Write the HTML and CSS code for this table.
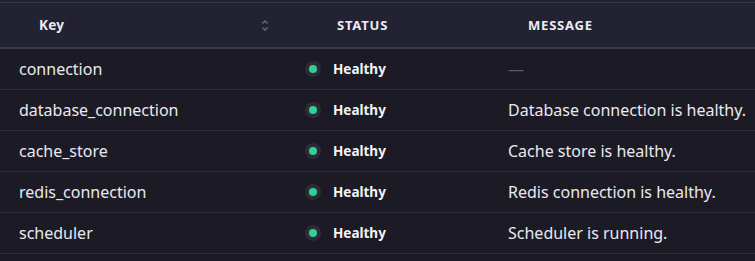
FILE: index.html
```html
<!DOCTYPE html>
<html>
<head>
<meta charset="utf-8">
<link rel="stylesheet" href="styles.css">
</head>
<body>
<div class="table">
  <div class="row head">
    <div class="cell key-h">
      <span>Key</span>
      <svg class="sort" width="8" height="13" viewBox="0 0 8 13"><path d="M1.5 4.5 L4 2 L6.5 4.5" fill="none" stroke="#6c6b80" stroke-width="1.3"/><path d="M1.5 8.5 L4 11 L6.5 8.5" fill="none" stroke="#6c6b80" stroke-width="1.3"/></svg>
    </div>
    <div class="cell status-h">STATUS</div>
    <div class="cell msg-h">MESSAGE</div>
  </div>
  <div class="row">
    <div class="cell key">connection</div>
    <div class="cell status"><span class="dot"></span><span class="label">Healthy</span></div>
    <div class="cell msg"><span class="dash">—</span></div>
  </div>
  <div class="row">
    <div class="cell key">database_connection</div>
    <div class="cell status"><span class="dot"></span><span class="label">Healthy</span></div>
    <div class="cell msg">Database connection is healthy.</div>
  </div>
  <div class="row">
    <div class="cell key">cache_store</div>
    <div class="cell status"><span class="dot"></span><span class="label">Healthy</span></div>
    <div class="cell msg">Cache store is healthy.</div>
  </div>
  <div class="row">
    <div class="cell key">redis_connection</div>
    <div class="cell status"><span class="dot"></span><span class="label">Healthy</span></div>
    <div class="cell msg">Redis connection is healthy.</div>
  </div>
  <div class="row">
    <div class="cell key">scheduler</div>
    <div class="cell status"><span class="dot"></span><span class="label">Healthy</span></div>
    <div class="cell msg">Scheduler is running.</div>
  </div>
</div>
</body>
</html>
```
FILE: styles.css
```css
html, body {
  margin: 0;
  padding: 0;
  background: #1c1b25;
}
body {
  font-family: "Noto Sans", "Open Sans", sans-serif;
  color: #e9e9f0;
  padding-top: 2px;
  background: linear-gradient(#22212f 0 2px, #1c1b25 2px);
}
.table {
  width: 755px;
  border-top: 1px solid #3a394c;
}
.row {
  display: grid;
  grid-template-columns: 286px 203px 1fr;
  height: 40px;
  border-bottom: 1px solid #2e2d3b;
  background: #1c1b25;
}
.row.head {
  height: 44px;
  background: #232233;
  border-bottom: 2px solid #3b3a4f;
}
.cell {
  display: flex;
  align-items: center;
  padding-left: 19px;
  font-size: 16px;
  white-space: nowrap;
}
.head .cell {
  font-size: 13px;
  font-weight: 700;
  letter-spacing: 0.8px;
  color: #ececf3;
}
.key-h {
  padding-left: 39px;
  padding-right: 17px;
  justify-content: space-between;
}
.key-h span { letter-spacing: 0.3px; font-size: 13.5px; }
.status-h { padding-left: 51px; }
.msg-h { padding-left: 39px; }
.sort { display: block; }
.dot {
  width: 16px;
  height: 16px;
  border-radius: 50%;
  background: #2c2b38;
  display: flex;
  align-items: center;
  justify-content: center;
  margin-right: 12px;
}
.dot::after {
  content: "";
  width: 8px;
  height: 8px;
  border-radius: 50%;
  background: #31d192;
}
.label {
  font-size: 13.5px;
  font-weight: 700;
  color: #f4f4f8;
}
.dash {
  color: #5b5a6c;
}
```
